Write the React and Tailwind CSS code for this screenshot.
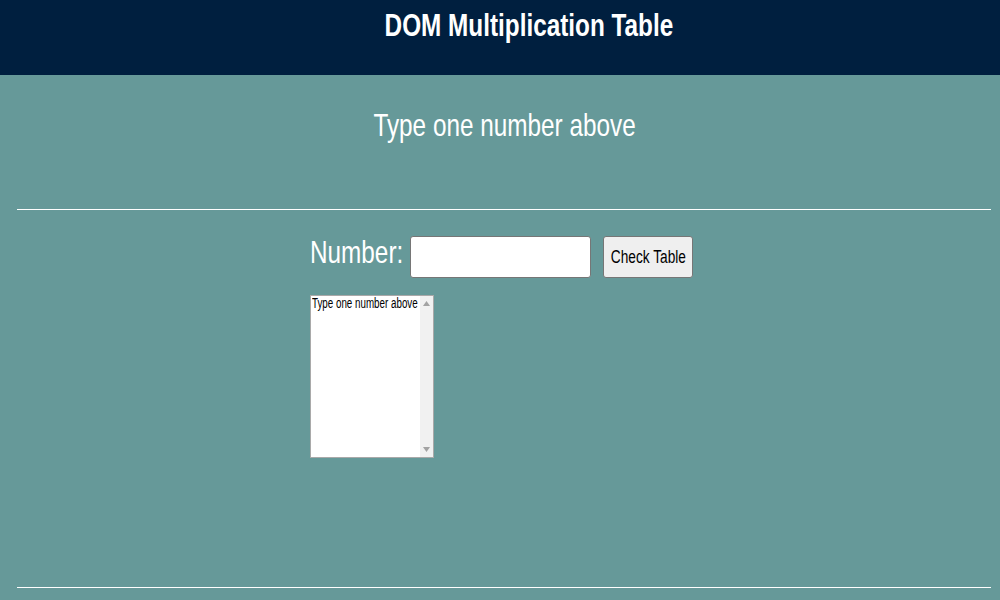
import React from 'react';

const sans = { fontFamily: '"Liberation Sans", Arial, sans-serif' };

function Narrow({ children, className = '' }) {
	return (
		<span className={`inline-block whitespace-nowrap scale-x-[0.76] ${className}`}>
			{children}
		</span>
	);
}

function ScrollArrow({ down }) {
	return (
		<svg width="7" height="5" viewBox="0 0 7 5" className="mx-auto">
			<path d={down ? 'M0 0 H7 L3.5 5 Z' : 'M0 5 H7 L3.5 0 Z'} fill="#a3a3a3" />
		</svg>
	);
}

export default function App() {
	return (
		<div className="min-h-[600px] bg-[#669999]" style={sans}>
			<header className="h-[75px] bg-[#001f3f] pt-[7px] pl-[58px]">
				<h1 className="text-center text-[32px] font-bold leading-[36px] text-white">
					<Narrow>DOM Multiplication Table</Narrow>
				</h1>
			</header>

			<p className="mt-[30px] pl-[9px] text-center text-[32px] leading-[40px] text-white">
				<Narrow>Type one number above</Narrow>
			</p>

			<hr className="mt-[64px] ml-[17px] mr-[9px] border-0 border-t border-white" />

			<div className="mx-auto mt-[26px] w-[380px]">
				<div className="flex items-start">
					<label className="mt-[-4px] w-[100px] shrink-0 text-[32px] leading-[40px] text-white">
						<Narrow className="origin-left">Number:</Narrow>
					</label>
					<input
						type="text"
						className="h-[42px] w-[181px] shrink-0 rounded-[3px] border border-[#767676] bg-white px-2 text-[16px] outline-none"
					/>
					<button className="ml-[12px] flex h-[42px] w-[90px] shrink-0 items-center justify-center rounded-[3px] border border-[#767676] bg-[#efefef] text-[18px] leading-[20px] text-black">
						<Narrow>Check Table</Narrow>
					</button>
				</div>

				<div className="mt-[17px] flex h-[163px] w-[124px] border border-[#a9a9a9] bg-white">
					<div className="flex-1 overflow-hidden pl-[1px] text-[14px] leading-[15px] text-black">
						<span className="inline-block origin-left whitespace-nowrap scale-x-[0.7]">
							Type one number above
						</span>
					</div>
					<div className="flex w-[13px] flex-col justify-between bg-[#f1f1f1] py-[5px]">
						<ScrollArrow />
						<ScrollArrow down />
					</div>
				</div>
			</div>

			<hr className="mt-[129px] ml-[17px] mr-[9px] border-0 border-t border-white" />
		</div>
	);
}
